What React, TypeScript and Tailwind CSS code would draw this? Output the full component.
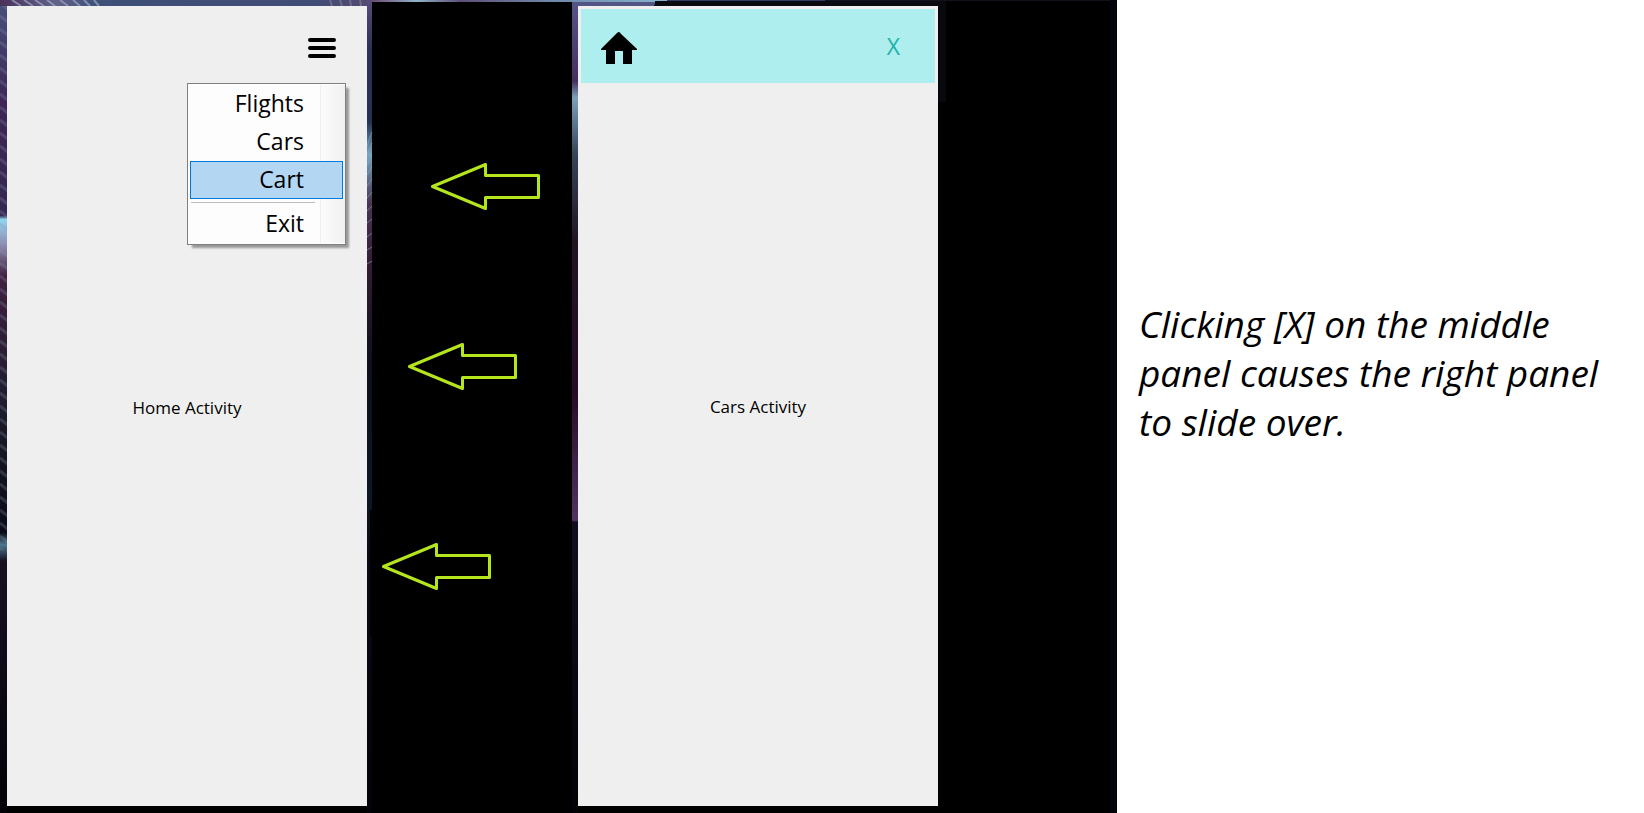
import { useState } from "react";

const menuItems = ["Flights", "Cars", "Cart"];

function Arrow({ className }: { className: string }) {
  return (
    <svg aria-hidden="true" width="112" height="48" viewBox="0 0 112 48" fill="none" stroke="#b5e61d" strokeWidth="3" strokeLinejoin="round" className={className}>
      <path d="M2.500 23.500L55.500 1.500V12.500H108.500V34.500H55.500V45.500Z" />
    </svg>
  );
}

function Wallpaper() {
  return (
    <svg aria-hidden="true" className="absolute inset-0 h-full w-full" viewBox="0 0 1117 813" preserveAspectRatio="none">
      <defs>
        <linearGradient id="left" x1="0" y1="0" x2="0" y2="1">
          <stop offset="0" stopColor="#47507d" />
          <stop offset="0.130" stopColor="#3d2555" />
          <stop offset="0.265" stopColor="#352750" />
          <stop offset="0.270" stopColor="#90d4f0" />
          <stop offset="0.300" stopColor="#9090b4" />
          <stop offset="0.340" stopColor="#402040" />
          <stop offset="0.500" stopColor="#1d1c2d" />
          <stop offset="0.655" stopColor="#0b0b15" />
          <stop offset="0.670" stopColor="#4d7890" />
          <stop offset="0.690" stopColor="#171022" />
          <stop offset="1" stopColor="#020207" />
        </linearGradient>
        <linearGradient id="gap" x1="0" y1="0" x2="0" y2="1">
          <stop offset="0" stopColor="#584c7a" />
          <stop offset="0.060" stopColor="#2b3157" />
          <stop offset="0.150" stopColor="#253252" />
          <stop offset="0.190" stopColor="#78a8c0" />
          <stop offset="0.250" stopColor="#4a3555" />
          <stop offset="0.320" stopColor="#351d35" />
          <stop offset="0.450" stopColor="#0e0e1b" />
          <stop offset="0.610" stopColor="#0a1925" />
          <stop offset="0.680" stopColor="#0b0a18" />
          <stop offset="1" stopColor="#020207" />
        </linearGradient>
        <linearGradient id="middle" x1="0" y1="0" x2="0" y2="1">
          <stop offset="0" stopColor="#575688" />
          <stop offset="0.100" stopColor="#44305f" />
          <stop offset="0.120" stopColor="#7da0bd" />
          <stop offset="0.190" stopColor="#354459" />
          <stop offset="0.300" stopColor="#211421" />
          <stop offset="0.480" stopColor="#260b27" />
          <stop offset="0.640" stopColor="#513361" />
          <stop offset="0.642" stopColor="#120e20" />
          <stop offset="1" stopColor="#020207" />
        </linearGradient>
        <linearGradient id="top" x1="0" y1="0" x2="1" y2="0">
          <stop offset="0" stopColor="#4a315a" />
          <stop offset="0.150" stopColor="#62618a" />
          <stop offset="0.260" stopColor="#3e5078" />
          <stop offset="0.850" stopColor="#414c75" />
          <stop offset="1" stopColor="#554970" />
        </linearGradient>
        <linearGradient id="topMiddle" x1="0" y1="0" x2="1" y2="0">
          <stop offset="0" stopColor="#6c4a70" />
          <stop offset="0.150" stopColor="#8fb4c8" />
          <stop offset="0.300" stopColor="#5f5078" />
          <stop offset="0.600" stopColor="#6f87a8" />
          <stop offset="1" stopColor="#86b4cf" />
        </linearGradient>
        <pattern id="rays" width="9" height="13" patternUnits="userSpaceOnUse">
          <path d="M0 3L9 10" stroke="#8796b0" strokeOpacity="0.250" strokeWidth="3" />
        </pattern>
      </defs>
      <rect width="1117" height="813" fill="#000" />
      <rect width="7" height="813" fill="url(#left)" />
      <rect width="7" height="550" fill="url(#rays)" />
      <rect width="372" height="6" fill="url(#top)" />
      <path d="M12 0l9 6M24 0l9 6M35 0l9 6M47 0l8 6M60 0l8 6M73 0l7 6M84 0l6 6M94 0l5 6" stroke="#9aa9bd" strokeOpacity="0.700" strokeWidth="2" />
      <path d="M330 0l2 6M340 0l2 6M350 0l1 6M360 0l1 6" stroke="#8a7f9f" strokeOpacity="0.600" strokeWidth="2" />
      <rect x="367" width="5" height="813" fill="url(#gap)" />
      <rect x="370" y="510" width="2" height="126" fill="#000" />
      <path d="M367 146l5-14M367 155l5-12M367 165l5-10M367 175l5-8M367 186l5-7M367 198l5-6M367 211l5-5M367 223l5-4M367 237l5-4M367 250l5-3M367 264l5-3" stroke="#8ba6ba" strokeOpacity="0.600" />
      <rect x="572" width="6" height="813" fill="url(#middle)" />
      <rect x="372" width="295" height="2" fill="url(#topMiddle)" />
      <path d="M572 2h84l-2 4h-82z" fill="#535584" />
      <rect x="655" y="1" width="283" height="5" fill="#0a0910" />
      <rect x="667" width="158" height="1" fill="#303b66" />
      <rect x="825" width="292" height="1" fill="#12111f" />
      <rect x="938" y="1" width="8" height="101" fill="#08080f" />
      <rect x="1110" width="7" height="813" fill="#05050c" />
    </svg>
  );
}

export default function App() {
  const [selected, setSelected] = useState("Cart");

  return (
    <main className="flex min-h-screen bg-white font-['Open_Sans','Noto_Sans',sans-serif] text-black">
      <div className="relative grid w-[67.9%] min-w-[1117px] shrink-0 grid-cols-[minmax(0,1fr)_211px_minmax(0,1fr)] pt-1.5 pr-[179px] pb-[7px] pl-[7px]">
        <Wallpaper />
        <section aria-label="Home" className="relative flex flex-col bg-[#efefef]">
          <div className="flex h-[77px] shrink-0 items-center justify-end pt-[7px] pr-7">
            <button aria-label="Menu" className="flex h-10 w-[34px] items-center justify-center">
              <svg aria-hidden="true" width="28" height="20" viewBox="0 0 28 20" stroke="#000" strokeWidth="4" strokeLinecap="round">
                <path d="M2 2H26M2 10H26M2 18H26" />
              </svg>
            </button>
          </div>
          <div className="absolute top-[77px] right-[21px] w-[159px] border border-[#808080] bg-[#fdfdfd] shadow-[4px_4px_2px_-1px_#999]">
            <div className="absolute inset-y-px right-0 w-[25px] border-l border-[#eeeeee] bg-linear-to-r from-[#fcfcfc] to-[#f0f0f0]" />
            <nav aria-label="Main" className="relative flex flex-col px-0.5 py-px text-[23px] leading-[34px]">
              {menuItems.map((item) => (
                <button
                  key={item}
                  onClick={() => setSelected(item)}
                  className={`flex h-[38px] justify-end border pr-[38px] ${selected === item ? "border-[#0078d7] bg-[#b3d7f3]" : "border-transparent"}`}
                >
                  {item}
                </button>
              ))}
              <div className="mt-[3px] mr-7 mb-0.5 ml-px h-px bg-[#bdbdbd]" />
              <button className="flex h-[38px] justify-end border border-transparent pr-[38px]">Exit</button>
            </nav>
          </div>
          <p className="flex flex-1 items-center justify-center pb-[74px] text-[17px]">Home Activity</p>
        </section>
        <div className="relative">
          <Arrow className="absolute top-[157px] left-[63px]" />
          <Arrow className="absolute top-[337px] left-10" />
          <Arrow className="absolute top-[537px] left-3.5" />
        </div>
        <section aria-label="Cars" className="relative flex flex-col bg-[#efefef] p-[3px]">
          <header className="flex h-[74px] shrink-0 items-center justify-between bg-[#afeeee] pr-[35px] pl-5">
            <button aria-label="Home" className="pt-1">
              <svg aria-hidden="true" width="36" height="32" viewBox="0 0 36 32">
                <path d="M18 0L36 17V18H31V32H22V19H14V32H5V18H0V17L16 1Q18 -1 20 1Z" />
              </svg>
            </button>
            <button aria-label="Close" className="text-[23px] text-[#20b2aa]">X</button>
          </header>
          <p className="flex flex-1 items-center justify-center pb-[72px] text-[17px]">Cars Activity</p>
        </section>
      </div>
      <aside className="flex flex-1 items-center pr-8 pb-[68px] pl-[22px]">
        <p className="text-[37px] leading-[49px] italic">
          Clicking [X] on the middle panel causes the right panel to slide over.
        </p>
      </aside>
    </main>
  );
}
